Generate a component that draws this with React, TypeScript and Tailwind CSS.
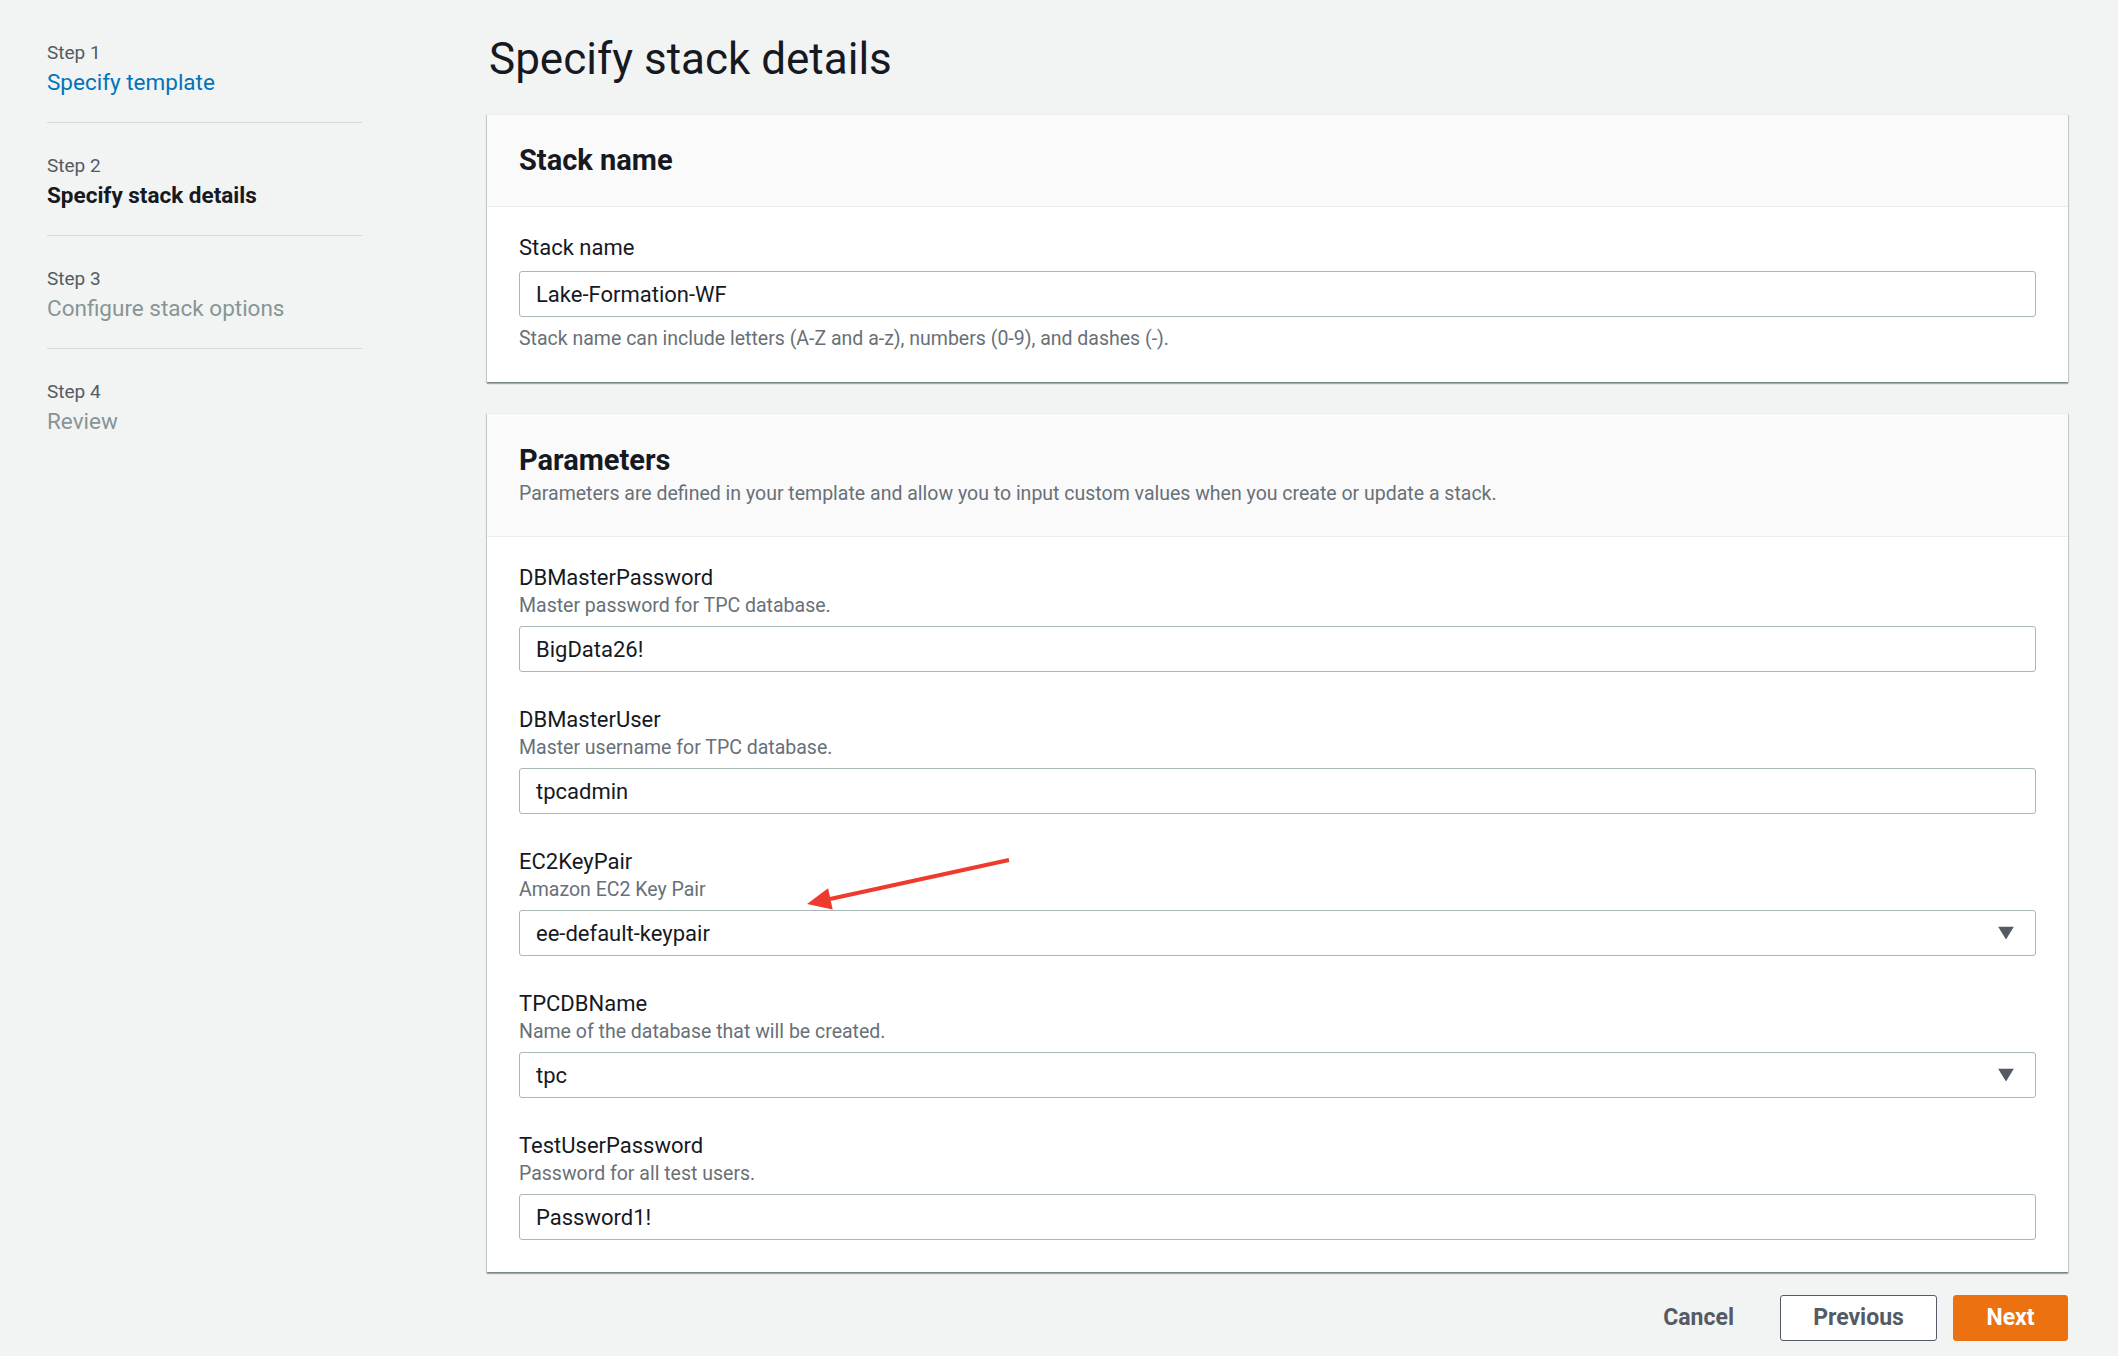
import React from "react";

const steps = [
  { step: "Step 1", title: "Specify template", state: "done" },
  { step: "Step 2", title: "Specify stack details", state: "current" },
  { step: "Step 3", title: "Configure stack options", state: "todo" },
  { step: "Step 4", title: "Review", state: "todo" },
];

const params = [
  { name: "DBMasterPassword", desc: "Master password for TPC database.", value: "BigData26!", select: false },
  { name: "DBMasterUser", desc: "Master username for TPC database.", value: "tpcadmin", select: false },
  { name: "EC2KeyPair", desc: "Amazon EC2 Key Pair", value: "ee-default-keypair", select: true },
  { name: "TPCDBName", desc: "Name of the database that will be created.", value: "tpc", select: true },
  { name: "TestUserPassword", desc: "Password for all test users.", value: "Password1!", select: false },
];

const cardShadow =
  "shadow-[0_2px_1px_0_rgba(0,28,36,0.3),1px_1px_1px_0_rgba(0,28,36,0.15),-1px_1px_1px_0_rgba(0,28,36,0.15)]";

const Caret = () => (
  <svg width="16" height="13" viewBox="0 0 16 13" className="absolute right-[21px] top-1/2 -translate-y-1/2">
    <path d="M0 0 H16 L8 13 Z" fill="#545b64" />
  </svg>
);

const Input = ({ value, select }: { value: string; select?: boolean }) => (
  <div className="relative h-[46px] rounded-[3px] border border-[#aab7b8] bg-white pl-[16px] flex items-center text-[22px] text-[#16191f]">
    {value}
    {select && <Caret />}
  </div>
);

const Sidebar = () => (
  <nav className="w-[315px] shrink-0 pt-[39px]">
    {steps.map((s, i) => (
      <div
        key={s.step}
        className={`${i > 0 ? "pt-[29px]" : ""} ${i < steps.length - 1 ? "pb-[23px] border-b border-[#d5dbdb]" : ""}`}
      >
        <div className="text-[19px] leading-[27px] text-[#545b64]">{s.step}</div>
        <div
          className={`text-[22.5px] leading-[33px] ${
            s.state === "done"
              ? "text-[#0073bb]"
              : s.state === "current"
              ? "text-[#16191f] font-bold"
              : "text-[#879596]"
          }`}
        >
          {s.title}
        </div>
      </div>
    ))}
  </nav>
);

export default function App() {
  return (
    <div
      className="relative min-h-screen bg-[#f2f3f3] text-[#16191f]"
      style={{ fontFamily: "Roboto, 'Noto Sans', sans-serif" }}
    >
      <div className="flex pl-[47px] pr-[50px]">
        <Sidebar />
        <main className="ml-[125px] flex-1 pt-[33px] pb-[17px]">
          <h1 className="text-[44px] leading-[52px] text-[#16191f] pl-[2px]">Specify stack details</h1>

          <section className={`mt-[29px] bg-white border-t border-[#eaeded] ${cardShadow}`}>
            <div className="bg-[#fafafa] border-b border-[#eaeded] px-[32px] pt-[29px] pb-[29px]">
              <h2 className="text-[29px] leading-[33px] font-bold">Stack name</h2>
            </div>
            <div className="px-[32px] pt-[24px] pb-[31px]">
              <div className="text-[22px] leading-[33px]">Stack name</div>
              <div className="mt-[7px]">
                <Input value="Lake-Formation-WF" />
              </div>
              <p className="mt-[10px] text-[19.5px] leading-[24px] text-[#687078]">
                Stack name can include letters (A-Z and a-z), numbers (0-9), and dashes (-).
              </p>
            </div>
          </section>

          <section className={`mt-[31px] bg-white border-t border-[#eaeded] ${cardShadow}`}>
            <div className="bg-[#fafafa] border-b border-[#eaeded] px-[32px] pt-[30px] pb-[30px]">
              <h2 className="text-[29px] leading-[33px] font-bold">Parameters</h2>
              <p className="mt-[5px] text-[19.5px] leading-[24px] text-[#687078]">
                Parameters are defined in your template and allow you to input custom values when you create or update a stack.
              </p>
            </div>
            <div className="px-[32px] pt-[24px] pb-[32px] flex flex-col gap-[31px]">
              {params.map((p) => (
                <div key={p.name}>
                  <div className="text-[22px] leading-[33px]">{p.name}</div>
                  <div className="text-[19.5px] leading-[24px] text-[#687078]">{p.desc}</div>
                  <div className="mt-[8px]">
                    <Input value={p.value} select={p.select} />
                  </div>
                </div>
              ))}
            </div>
          </section>

          <div className="mt-[23px] flex justify-end items-center gap-[16px]">
            <button className="h-[46px] px-[30px] text-[23px] font-bold text-[#545b64]">Cancel</button>
            <button className="h-[46px] w-[157px] rounded-[3px] border border-[#545b64] bg-white text-[23px] font-bold text-[#545b64]">
              Previous
            </button>
            <button className="h-[46px] w-[115px] rounded-[3px] border border-[#ec7211] bg-[#ec7211] text-[23px] font-bold text-white">
              Next
            </button>
          </div>
        </main>
      </div>

      <svg
        className="absolute left-[800px] top-[850px] pointer-events-none"
        width="220"
        height="70"
        viewBox="0 0 220 70"
      >
        <line x1="209" y1="10" x2="30" y2="49" stroke="#ef3b2d" strokeWidth="4" />
        <path d="M7 54 L32.7 59.6 L28.1 38.2 Z" fill="#ef3b2d" />
      </svg>
    </div>
  );
}
